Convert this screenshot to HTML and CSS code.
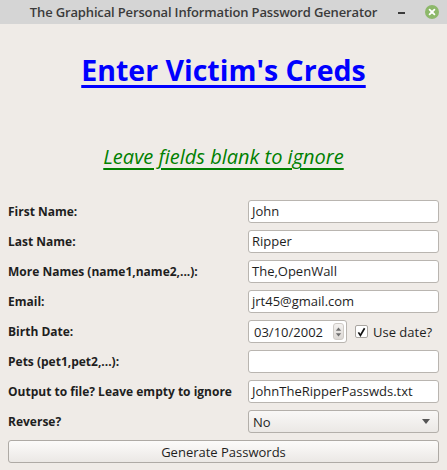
FILE: index.html
```html
<!DOCTYPE html>
<html>
<head>
<meta charset="utf-8">
<link rel="stylesheet" href="styles.css">
</head>
<body>
<div class="window">
  <div class="titlebar">
    <div class="title">The Graphical Personal Information Password Generator</div>
    <div class="controls">
      <span class="minimize"></span>
      <span class="close">
        <svg width="14" height="14" viewBox="0 0 14 14"><circle cx="7" cy="7" r="7" fill="#8db86a"/><path d="M4.6 4.6 L9.4 9.4 M9.4 4.6 L4.6 9.4" stroke="#fff" stroke-width="1.8" stroke-linecap="round"/></svg>
      </span>
    </div>
  </div>
  <div class="content">
    <h1 class="heading">Enter Victim's Creds</h1>
    <p class="hint">Leave fields blank to ignore</p>
    <div class="form">
      <label class="lbl">First Name:</label>
      <div class="field">John</div>
      <label class="lbl">Last Name:</label>
      <div class="field">Ripper</div>
      <label class="lbl">More Names (name1,name2,...):</label>
      <div class="field">The,OpenWall</div>
      <label class="lbl">Email:</label>
      <div class="field">jrt45@gmail.com</div>
      <label class="lbl">Birth Date:</label>
      <div class="daterow">
        <div class="spin">
          <span class="spintext">03/10/2002</span>
          <span class="spinbtn">
            <svg width="10" height="16" viewBox="0 0 10 16"><path d="M2 6.5 L5 3 L8 6.5 Z" fill="#6f6f6f"/><path d="M2 9.5 L5 13 L8 9.5 Z" fill="#6f6f6f"/></svg>
          </span>
        </div>
        <span class="check"><svg width="9" height="10" viewBox="0 0 9 10"><path d="M1.4 5.4 L3.4 8.4 L7.6 1.2" fill="none" stroke="#111" stroke-width="1.7"/></svg></span>
        <span class="checklabel">Use date?</span>
      </div>
      <label class="lbl">Pets (pet1,pet2,...):</label>
      <div class="field"></div>
      <label class="lbl">Output to file? Leave empty to ignore</label>
      <div class="field">JohnTheRipperPasswds.txt</div>
      <label class="lbl">Reverse?</label>
      <div class="combo"><span>No</span><span class="arrow"></span></div>
      <button class="generate">Generate Passwords</button>
    </div>
  </div>
</div>
</body>
</html>
```
FILE: styles.css
```css
html, body {
  margin: 0;
  padding: 0;
}
body {
  width: 447px;
  height: 470px;
  background: #efebe7;
  font-family: "Open Sans", "Noto Sans", sans-serif;
  color: #1e1e1e;
  overflow: hidden;
}
.window {
  display: flex;
  flex-direction: column;
  height: 470px;
}
.titlebar {
  height: 24px;
  background: #d5d5d5;
  display: flex;
  align-items: center;
}
.title {
  width: 407px;
  text-align: center;
  font-size: 13px;
  letter-spacing: -0.15px;
  color: #3b3b3b;
  font-weight: 600;
}
.controls {
  display: flex;
  align-items: center;
  gap: 20px;
  margin-left: -9px;
}
.minimize {
  display: block;
  width: 7px;
  height: 2px;
  background: #3b3b3b;
  margin-top: 1px;
}
.close {
  display: flex;
  width: 14px;
  height: 14px;
}
.content {
  padding: 0 8px;
  display: flex;
  flex-direction: column;
}
.heading {
  margin: 26px 0 0;
  height: 40px;
  line-height: 40px;
  text-align: center;
  color: #0000ff;
  font-size: 28.5px;
  font-weight: 700;
  text-decoration: underline;
  text-decoration-thickness: 3px;
  text-underline-offset: 4px;
}
.hint {
  margin: 52px 0 0;
  height: 30px;
  line-height: 30px;
  text-align: center;
  color: #008000;
  font-size: 20px;
  font-style: italic;
  text-decoration: underline;
  text-underline-offset: 4px;
}
.form {
  margin-top: 28px;
  display: grid;
  grid-template-columns: 240px 191px;
  grid-auto-rows: 23px;
  row-gap: 7px;
  align-items: center;
}
.lbl {
  font-weight: 700;
  font-size: 12px;
  white-space: nowrap;
}
.field {
  height: 23px;
  box-sizing: border-box;
  background: #fff;
  border: 1px solid #b9b5b0;
  border-radius: 3px;
  font-size: 13px;
  line-height: 21px;
  padding-left: 3px;
  color: #1e1e1e;
  white-space: nowrap;
}
.daterow {
  display: flex;
  align-items: center;
  height: 23px;
}
.spin {
  width: 99px;
  height: 23px;
  box-sizing: border-box;
  background: #fff;
  border: 1px solid #b9b5b0;
  border-radius: 3px;
  display: flex;
  align-items: center;
  justify-content: space-between;
  font-size: 13px;
  padding-left: 5px;
  padding-right: 2px;
}
.spinbtn {
  display: flex;
  height: 17px;
  width: 11px;
  border-radius: 3px;
  background: linear-gradient(#f4f2f0, #dcd8d4);
  border: 1px solid #cfcbc6;
  align-items: center;
  justify-content: center;
  box-sizing: border-box;
}
.spinbtn svg {
  display: block;
}
.check {
  margin-left: 8px;
  width: 13px;
  height: 13px;
  box-sizing: border-box;
  border: 1px solid #a9a5a0;
  border-radius: 2px;
  background: #fff;
  display: flex;
  align-items: center;
  justify-content: center;
}
.checklabel {
  margin-left: 5px;
  font-size: 13px;
}
.combo {
  height: 23px;
  box-sizing: border-box;
  border: 1px solid #b3afaa;
  border-radius: 3px;
  background: linear-gradient(#f9f8f7, #ebe8e5);
  display: flex;
  align-items: center;
  justify-content: space-between;
  font-size: 13px;
  padding: 0 8px 0 4px;
}
.arrow {
  width: 0;
  height: 0;
  border-left: 4px solid transparent;
  border-right: 4px solid transparent;
  border-top: 5px solid #555;
}
.generate {
  grid-column: 1 / 3;
  height: 23px;
  margin: 0;
  box-sizing: border-box;
  border: 1px solid #aeaaa5;
  border-radius: 3px;
  background: linear-gradient(#fcfbfa, #ebe8e5);
  font-family: inherit;
  font-size: 13px;
  color: #1e1e1e;
  padding: 0;
}
```
